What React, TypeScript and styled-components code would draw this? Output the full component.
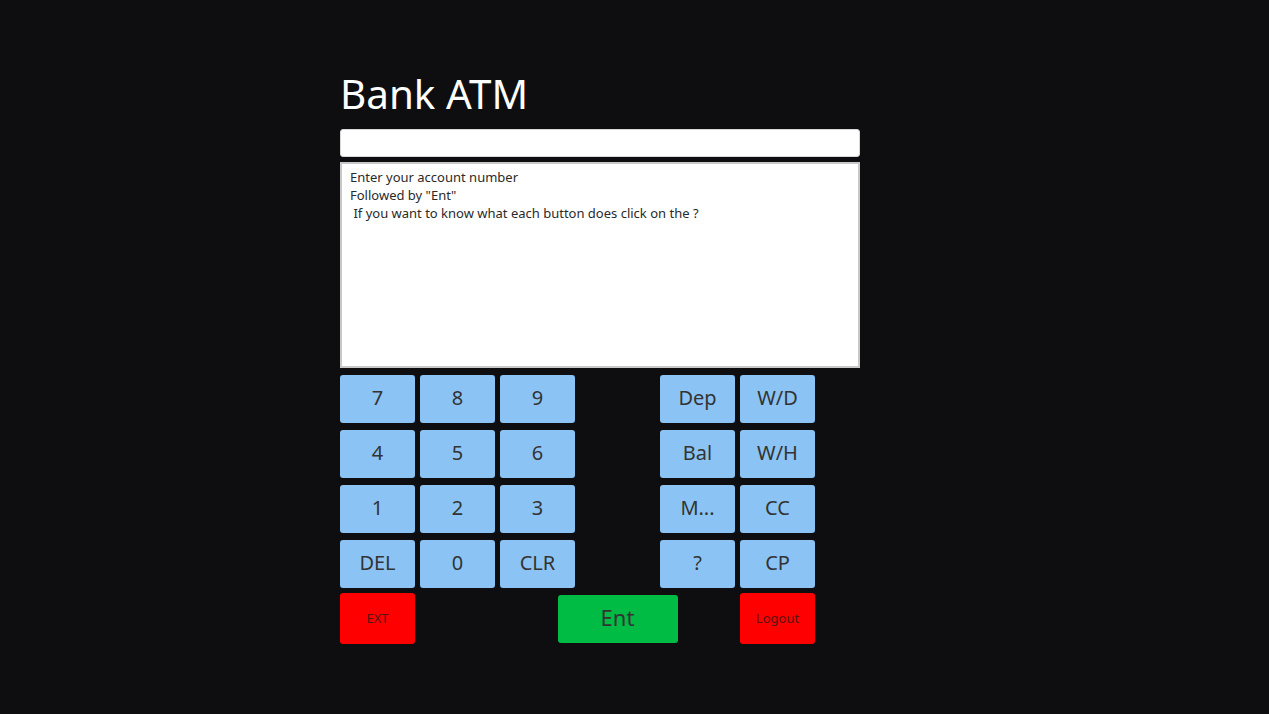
import React from "react";
import styled, { createGlobalStyle } from "styled-components";

const Global = createGlobalStyle`
  html, body { margin: 0; padding: 0; background: #0e0e10; }
  body { font-family: "Noto Sans", "Open Sans", sans-serif; }
`;

const Page = styled.div`
  min-height: 714px;
  background: #0e0e10;
  padding-top: 67px;
  box-sizing: border-box;
`;

const Container = styled.div`
  width: 589px;
  margin: 0 auto;
  display: flex;
  flex-direction: column;
`;

const Title = styled.h1`
  margin: 0 0 8px 0;
  font-family: "Noto Sans", sans-serif;
  font-weight: 400;
  font-size: 40.4px;
  line-height: 54px;
  color: #ffffff;
`;

const Display = styled.div`
  width: 520px;
  height: 28px;
  background: #ffffff;
  border-radius: 3px;
  box-sizing: border-box;
  border: 1px solid #d8d8d8;
`;

const Screen = styled.div`
  margin-top: 5px;
  width: 520px;
  height: 206px;
  box-sizing: border-box;
  background: #ffffff;
  border: 2px solid #c8c8c8;
  padding: 4px 8px;
  font-size: 13px;
  line-height: 18px;
  color: #2a2a2a;
  white-space: pre;
`;

const Pad = styled.div`
  margin-top: 7px;
  display: grid;
  grid-template-columns: repeat(6, 75px);
  grid-auto-rows: 48px;
  column-gap: 5px;
  row-gap: 7px;
`;

const Key = styled.button<{ $col?: number }>`
  grid-column: ${(p) => (p.$col ? `${p.$col}` : "auto")};
  border: none;
  border-radius: 3px;
  background: #8bc4f4;
  color: #333;
  font-family: "Noto Sans", sans-serif;
  font-size: 20px;
  padding: 0 0 3px 0;
  display: flex;
  align-items: center;
  justify-content: center;
`;

const LastRow = styled.div`
  grid-column: 1 / 7;
  margin-top: -2px;
  display: grid;
  grid-template-columns: repeat(6, 75px);
  column-gap: 5px;
  height: 51px;
  align-items: center;
`;

const Danger = styled.button<{ $col: number }>`
  grid-column: ${(p) => p.$col};
  height: 51px;
  border: none;
  border-radius: 3px;
  background: #ff0000;
  color: #5a1212;
  font-family: "Noto Sans", sans-serif;
  font-size: 13px;
  padding: 0 0 2px 0;
`;

const Enter = styled.button`
  grid-column: 3 / 6;
  justify-self: center;
  width: 120px;
  height: 48px;
  border: none;
  border-radius: 3px;
  background: #00bb44;
  color: #333;
  font-family: "Noto Sans", sans-serif;
  font-size: 22px;
  padding: 0 0 4px 0;
`;

const rows: (string | null)[][] = [
  ["7", "8", "9", null, "Dep", "W/D"],
  ["4", "5", "6", null, "Bal", "W/H"],
  ["1", "2", "3", null, "M...", "CC"],
  ["DEL", "0", "CLR", null, "?", "CP"],
];

export default function App() {
  return (
    <Page>
      <Global />
      <Container>
        <Title>Bank ATM</Title>
        <Display />
        <Screen>
          {'Enter your account number\nFollowed by "Ent"\n If you want to know what each button does click on the ?'}
        </Screen>
        <Pad>
          {rows.map((r, ri) =>
            r.map((k, ci) =>
              k === null ? null : (
                <Key key={`${ri}-${ci}`} $col={ci + 1}>
                  {k}
                </Key>
              )
            )
          )}
          <LastRow>
            <Danger $col={1}>EXT</Danger>
            <Enter>Ent</Enter>
            <Danger $col={6}>Logout</Danger>
          </LastRow>
        </Pad>
      </Container>
    </Page>
  );
}
